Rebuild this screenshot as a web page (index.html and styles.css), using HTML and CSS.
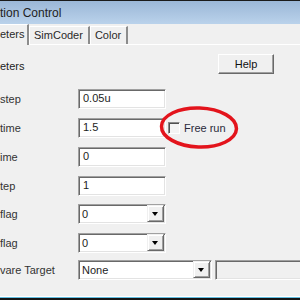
FILE: index.html
```html
<!DOCTYPE html>
<html lang="en">
<head>
    <meta charset="UTF-8">
    <title>Simulation Control</title>
    <link rel="stylesheet" href="styles.css">
</head>
<body>
    <div class="window">
        <div class="titlebar">tion Control</div>

        <div class="tabs">
            <div class="tab active">eters</div>
            <div class="tab">SimCoder</div>
            <div class="tab">Color</div>
        </div>

        <div class="panel">
            <div class="head">
                <span class="group">eters</span>
                <button class="btn">Help</button>
            </div>

            <div class="row">
                <span class="label">step</span>
                <div class="field">0.05u</div>
            </div>
            <div class="row">
                <span class="label">time</span>
                <div class="field">1.5</div>
                <label class="check"><span class="box"></span>Free run</label>
            </div>
            <div class="row">
                <span class="label">ime</span>
                <div class="field">0</div>
            </div>
            <div class="row">
                <span class="label">tep</span>
                <div class="field">1</div>
            </div>
            <div class="row tight">
                <span class="label">flag</span>
                <div class="combo"><span class="value">0</span><span class="arrow"></span></div>
            </div>
            <div class="row">
                <span class="label">flag</span>
                <div class="combo"><span class="value">0</span><span class="arrow"></span></div>
            </div>
            <div class="row last">
                <span class="label">vare Target</span>
                <div class="combo wide"><span class="value">None</span><span class="arrow"></span></div>
                <div class="field disabled"></div>
            </div>
        </div>

        <div class="strip"></div>

        <!-- red mark drawn over the screenshot -->
        <svg class="mark" width="84" height="48" viewBox="0 0 84 48">
            <ellipse cx="41" cy="23.5" rx="37.5" ry="19.5" fill="none" stroke="#e3141c" stroke-width="3.5" transform="rotate(2 41 23.5)"/>
        </svg>
    </div>
</body>
</html>
```

FILE: styles.css
```css
body {
    margin: 0;
    width: 300px;
    height: 300px;
    overflow: hidden;
    background-color: #f0f0f0;
    font-family: 'Liberation Sans', Arial, sans-serif;
    font-size: 11px;
    color: #1c1c1c;
}

.window {
    position: relative;
    display: flex;
    flex-direction: column;
    height: 300px;
}

.titlebar {
    height: 21px;
    padding-top: 2px;
    line-height: 21px;
    border-top: 1px solid #1a1a1a;
    background: linear-gradient(#9bb7d7, #bad2eb);
    font-size: 12px;
    color: #1e1e1e;
}

.tabs {
    display: flex;
    align-items: flex-end;
    height: 20px;
    position: relative;
    z-index: 1;
}

.tab {
    box-sizing: border-box;
    height: 18px;
    padding: 0 5px 0 4px;
    line-height: 17px;
    border-left: 1px solid #fff;
    border-top: 1px solid #fff;
    border-right: 2px solid #8c8c8c;
    color: #2a2a2a;
}

.tab.active {
    width: 29px;
    height: 21px;
    margin-bottom: -1px;
    padding-left: 0;
    border-left: none;
    line-height: 19px;
    background-color: #f0f0f0;
}

.panel {
    flex: 1;
    border-top: 1px solid #fff;
    padding-top: 9px;
}

.head {
    display: flex;
    align-items: center;
    height: 20px;
}

.group {
    width: 218px;
    padding-top: 4px;
}

.btn {
    box-sizing: border-box;
    width: 56px;
    height: 20px;
    padding: 0;
    font-family: inherit;
    font-size: 11px;
    color: #111;
    background-color: #f0f0f0;
    border: 1px solid;
    border-color: #fff #696969 #696969 #fff;
    box-shadow: inset -1px -1px 0 #a0a0a0;
}

.row {
    display: flex;
    align-items: center;
    height: 20px;
    margin-top: 9px;
}

.head + .row {
    margin-top: 15px;
}

.row.tight {
    margin-top: 8px;
}

.row.last {
    margin-top: 7px;
}

.label {
    width: 78px;
    flex: none;
    color: #333;
}

.field,
.combo {
    box-sizing: border-box;
    width: 88px;
    height: 20px;
    padding-left: 4px;
    line-height: 16px;
    background-color: #fff;
    border: 1px solid;
    border-color: #a0a0a0 #fff #fff #a0a0a0;
    box-shadow: inset 1px 1px 0 #696969, inset -1px -1px 0 #e3e3e3;
    flex: none;
}

.combo {
    display: flex;
    padding-left: 3px;
}

.combo .value {
    flex: 1;
    padding-top: 1px;
}

.combo.wide {
    width: 134px;
}

.arrow {
    box-sizing: border-box;
    width: 17px;
    height: 17px;
    margin-right: 1px;
    background-color: #f0f0f0;
    border: 1px solid;
    border-color: #f0f0f0 #696969 #696969 #f0f0f0;
    box-shadow: inset 1px 1px 0 #fff, inset -1px -1px 0 #a0a0a0;
    position: relative;
}

.arrow::after {
    content: "";
    position: absolute;
    left: 4px;
    top: 6px;
    border-left: 3.5px solid transparent;
    border-right: 3.5px solid transparent;
    border-top: 4px solid #000;
}

.field.disabled {
    width: 100px;
    margin-left: 3px;
    background-color: #f0f0f0;
}

.check {
    display: flex;
    align-items: center;
    margin-left: 2px;
    color: #2a2a3a;
}

.box {
    box-sizing: border-box;
    width: 12px;
    height: 12px;
    margin-right: 4px;
    border: 1px solid;
    border-color: #8a8a8a #fff #fff #8a8a8a;
    box-shadow: inset 1px 1px 0 #505050;
    background-color: #f4f4f4;
}

.strip {
    height: 3px;
    border-top: 1px solid #fff;
    box-shadow: inset 0 1px 0 #62bde0;
    background-color: #141414;
}

.mark {
    position: absolute;
    left: 158px;
    top: 104px;
}
```
